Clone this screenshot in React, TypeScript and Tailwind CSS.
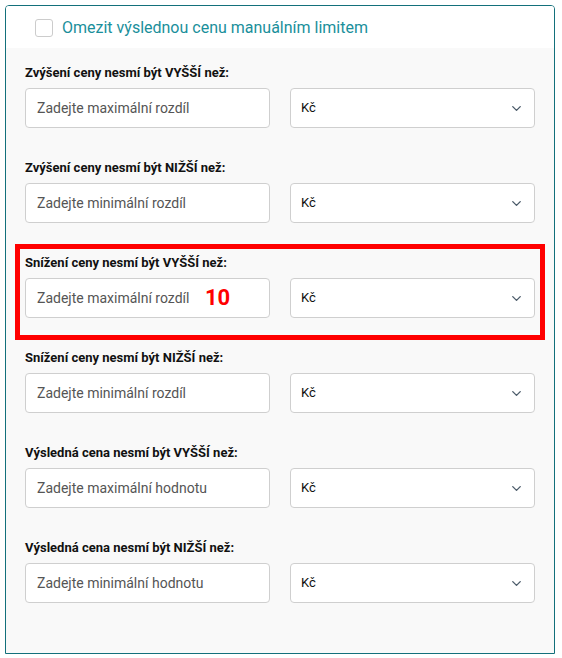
import { ChevronDown } from "lucide-react";

type Row = { label: string; placeholder: string; value?: string; highlight?: boolean };

const rows: Row[] = [
  { label: "Zvýšení ceny nesmí být VYŠŠÍ než:", placeholder: "Zadejte maximální rozdíl" },
  { label: "Zvýšení ceny nesmí být NIŽŠÍ než:", placeholder: "Zadejte minimální rozdíl" },
  { label: "Snížení ceny nesmí být VYŠŠÍ než:", placeholder: "Zadejte maximální rozdíl", value: "10", highlight: true },
  { label: "Snížení ceny nesmí být NIŽŠÍ než:", placeholder: "Zadejte minimální rozdíl" },
  { label: "Výsledná cena nesmí být VYŠŠÍ než:", placeholder: "Zadejte maximální hodnotu" },
  { label: "Výsledná cena nesmí být NIŽŠÍ než:", placeholder: "Zadejte minimální hodnotu" },
];

const LimitRow = ({ label, placeholder, value, highlight }: Row) => {
  return (
    <div className="relative">
      {highlight && (
        <div className="absolute -left-[10px] -right-[10px] -top-[9px] -bottom-[22px] border-[5px] border-[#ff0000] pointer-events-none" />
      )}
      <div className="h-5 leading-5 text-[13px] font-bold text-[#111]">{label}</div>
      <div className="mt-[5px] grid grid-cols-2 gap-5">
        <div className="relative h-10 rounded border border-[#cfcfcf] bg-white flex items-center px-[11px]">
          <span className="text-[14px] text-[#555]">{placeholder}</span>
          {value && (
            <span className="absolute left-[179px] top-[7px] text-[22px] leading-6 font-bold text-[#ff0000]">
              {value}
            </span>
          )}
        </div>
        <div className="h-10 rounded border border-[#cfcfcf] bg-white flex items-center justify-between pl-[10px] pr-[10px]">
          <span className="text-[13px] text-[#111]">Kč</span>
          <ChevronDown size={15} strokeWidth={2.2} className="text-[#4d5d6b]" />
        </div>
      </div>
    </div>
  );
};

export default function App() {
  return (
    <div className="w-[562px] h-[658px] bg-white pt-[5px] px-[5px] font-['Roboto',sans-serif]">
      <div className="w-[550px] h-[649px] border-[1.5px] border-[#13707b] rounded-t-[4px] flex flex-col overflow-hidden">
        <div className="h-[42px] bg-white flex items-center pl-[29px] pt-[1px] gap-[9px] shrink-0">
          <div className="w-[18px] h-[18px] rounded-[3px] border border-[#cccccc] bg-white" />
          <span className="text-[16px] text-[#1a8f9b]">Omezit výslednou cenu manuálním limitem</span>
        </div>
        <div className="flex-1 bg-[#f9f9f9] pt-[15px] pl-[19px] pr-[19px] flex flex-col gap-[30px]">
          {rows.map((r, i) => (
            <LimitRow key={i} {...r} />
          ))}
        </div>
      </div>
    </div>
  );
}
